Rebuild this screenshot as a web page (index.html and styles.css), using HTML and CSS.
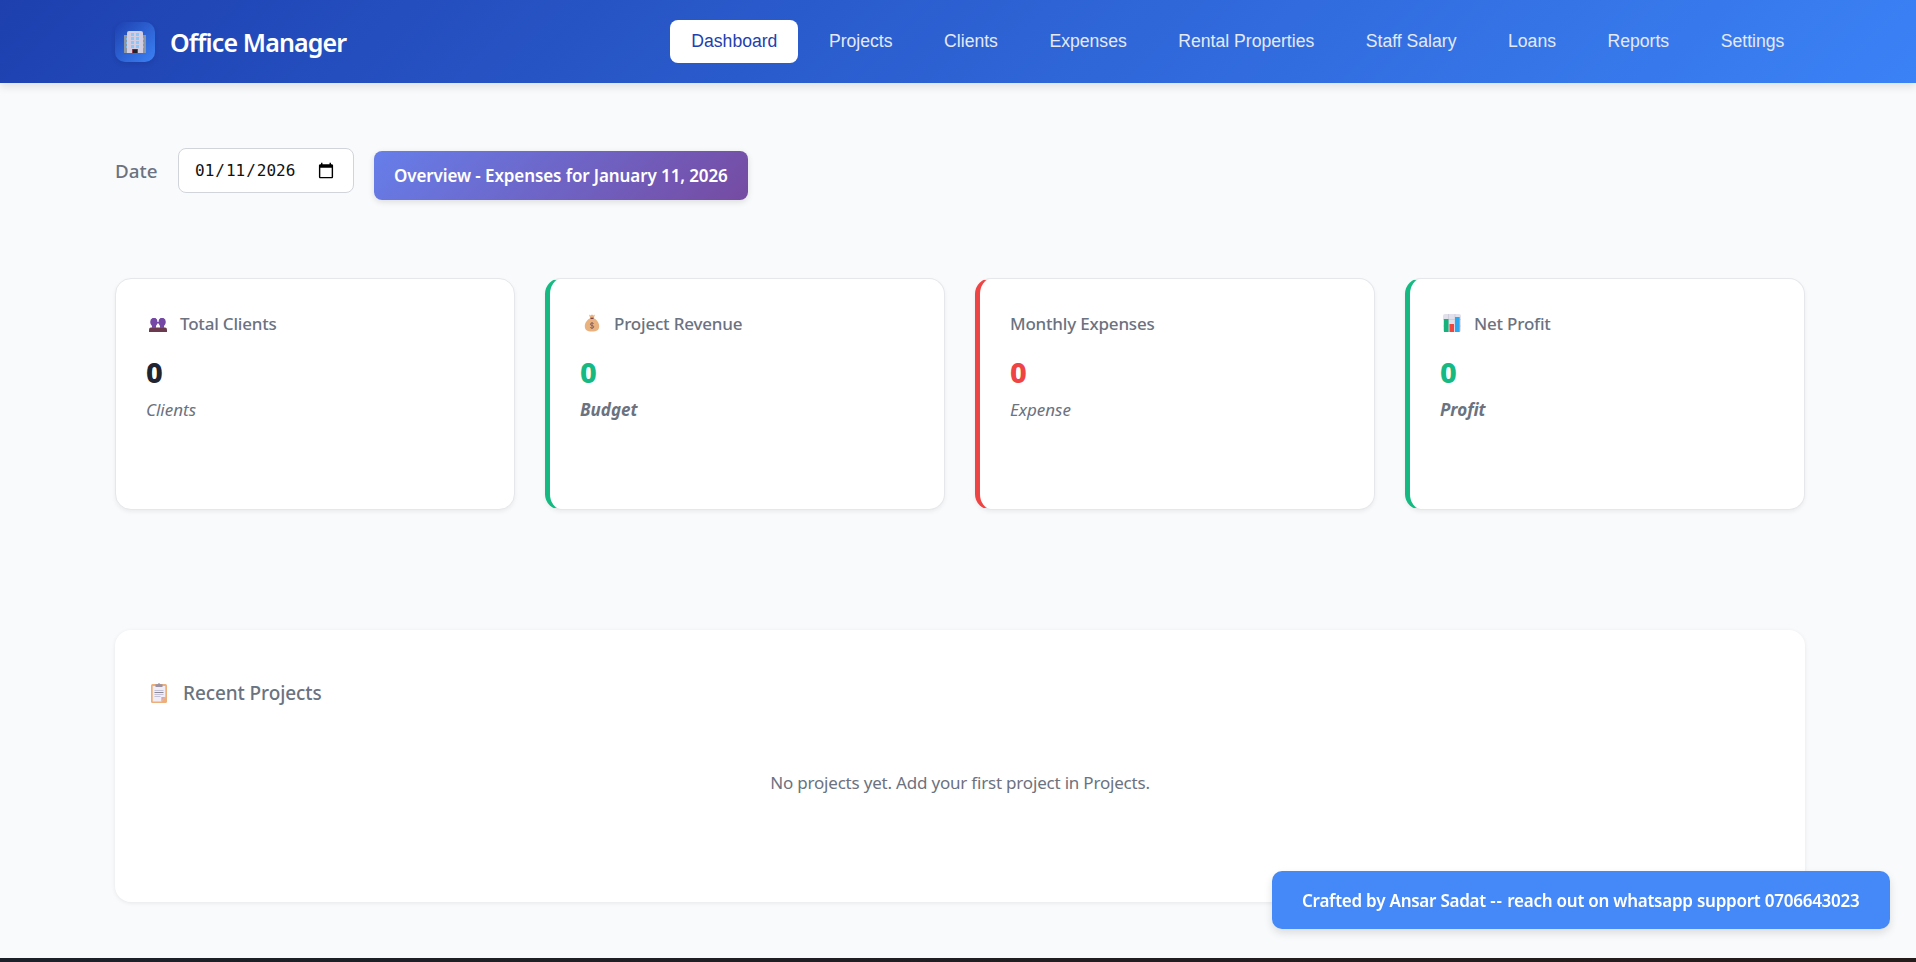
FILE: index.html
```html
<!DOCTYPE html>
<html lang="en">
<head>
<meta charset="utf-8">
<title>Office Manager</title>
<link rel="stylesheet" href="styles.css">
</head>
<body>
<header class="topbar">
  <div class="brand">
    <span class="logo">
      <svg width="22" height="23" viewBox="0 0 22 23"><path fill="#8d97a3" d="M0 4h4v18H0zM18 4h4v18h-4z"/><path fill="#79b9ec" d="M2 7h2v2H2zM2 11h2v2H2zM2 15h2v2H2zM18 7h2v2h-2zM18 11h2v2h-2zM18 15h2v2h-2z"/><path fill="#d2cde0" d="M5 0h12q2 0 2 2v20H3V2q0-2 2-2z"/><path fill="#8ac6f7" d="M7 2h3v3H7zM12 2h3v3h-3zM7 6h3v3H7zM12 6h3v3h-3zM7 10h3v3H7zM12 10h3v3h-3zM7 14h3v3H7zM12 14h3v3h-3z"/><path fill="#8b3b4d" d="M8 18h6v4H8z"/><path fill="#20232b" d="M9 18.500h4V22H9z"/></svg>
    </span>
    <span class="brand-name">Office Manager</span>
  </div>
  <nav class="nav">
    <a class="nav-link active">Dashboard</a>
    <a class="nav-link">Projects</a>
    <a class="nav-link">Clients</a>
    <a class="nav-link">Expenses</a>
    <a class="nav-link">Rental Properties</a>
    <a class="nav-link">Staff Salary</a>
    <a class="nav-link">Loans</a>
    <a class="nav-link">Reports</a>
    <a class="nav-link">Settings</a>
  </nav>
</header>
<main class="page">
  <div class="filters">
    <label class="date-label" for="date">Date</label>
    <input class="date-input" id="date" type="date" value="2026-01-11">
    <div class="overview">Overview - Expenses for January 11, 2026</div>
  </div>
  <section class="cards">
    <article class="card">
      <h3 class="card-title"><svg class="icon" width="18" height="18" viewBox="0 0 18 18"><path fill="#6b3a4e" d="M0 18v-2.500q0-2 2-2h14q2 0 2 2V18z"/><path fill="#7448a4" d="M3.500 4h3q2 1 2 4 0 2.500-1.500 4v2H3v-2q-1.800-1.500-1.800-4 0-3 2.300-4zM11.500 4h3q2.300 1 2.300 4 0 2.500-1.800 4v2h-4v-2q-1.500-1.500-1.500-4 0-3 2-4zM8 8h2v1.500H8z"/></svg><span>Total Clients</span></h3>
      <p class="value">0</p>
      <p class="sub">Clients</p>
    </article>
    <article class="card accent green">
      <h3 class="card-title"><svg class="icon" width="18" height="18" viewBox="0 0 18 18"><path fill="#e9b17e" d="M6 .5l1.500 1L9 .5l1.500 1 1.500-1-1.200 3.700c3 1 5.400 4.800 5.400 8 0 3.300-2 5.300-7.200 5.300s-7.200-2-7.200-5.300c0-3.200 2.400-7 5.400-8z"/><path stroke="#6b3440" stroke-width="1.200" d="M7.500 4.300h3"/><path fill="none" stroke="#8a6560" d="M10.700 10q-.4-1-1.700-1-1.600 0-1.600 1.200T9 11.500q1.800.2 1.800 1.400T9 14.200q-1.400 0-1.800-1M9 8v7"/></svg><span>Project Revenue</span></h3>
      <p class="value">0</p>
      <p class="sub strong">Budget</p>
    </article>
    <article class="card accent red">
      <h3 class="card-title"><span>Monthly Expenses</span></h3>
      <p class="value">0</p>
      <p class="sub">Expense</p>
    </article>
    <article class="card accent green">
      <h3 class="card-title"><svg class="icon" width="18" height="18" viewBox="0 0 18 18"><rect width="18" height="18" rx="2" fill="#e2e0ea"/><path stroke="#c9c7d6" stroke-width=".7" d="M0 5.500h18M0 12h18M5.500 0v18M12 0v18"/><path fill="#17b27c" d="M1 5h4.500v13H1z"/><path fill="#f0443f" d="M6.500 10H11v8H6.500z"/><path fill="#2aa9ee" d="M12 3h4.700v15H12z"/></svg><span>Net Profit</span></h3>
      <p class="value">0</p>
      <p class="sub strong">Profit</p>
    </article>
  </section>
  <section class="panel">
    <h2 class="panel-title"><svg class="clip" width="16" height="20" viewBox="0 0 16 20"><rect y="1" width="16" height="19" rx="1.500" fill="#edae7a"/><path fill="#f0edf6" d="M1.700 3h12.600v11l-4 4.500H1.700z"/><path fill="#d7a6b5" d="M14.300 14l-4 4.500V14z"/><path fill="#9a92a0" d="M4.500 1.200h2Q8-.800 9.500 1.200h2V4h-7z"/><path stroke="#c3c1d8" d="M3.500 7.500h9M3.500 11.500h9M3.500 13.500h6"/><path stroke="#8b8797" d="M3.500 9.500h9"/></svg><span>Recent Projects</span></h2>
    <p class="empty">No projects yet. Add your first project in Projects.</p>
  </section>
</main>
<footer class="footer"></footer>
<div class="toast">Crafted by Ansar Sadat <span class="dashes">--</span> reach out on whatsapp support 0706643023</div>
</body>
</html>
```

FILE: styles.css
```css
* { box-sizing: border-box; margin: 0; padding: 0; }
body {
  min-height: 962px;
  display: flex;
  flex-direction: column;
  background: #f9fafc;
  color: #6b7280;
  font-family: "Noto Sans", sans-serif;
  font-size: 17px;
}
.topbar {
  height: 83px;
  padding: 0 111px 0 115px;
  display: flex;
  justify-content: space-between;
  background: linear-gradient(135deg, #1e40af, #3b82f6);
  box-shadow: 0 4px 8px rgba(0, 0, 0, .1);
}
.brand { display: flex; align-items: center; gap: 15px; }
.logo {
  width: 40px;
  height: 40px;
  margin-top: 1px;
  display: grid;
  place-items: center;
  border-radius: 10px;
  background: linear-gradient(135deg, #1e40af, #3b82f6);
  box-shadow: 0 2px 5px rgba(0, 0, 0, .1);
}
.brand-name { color: #fff; font-size: 25px; font-weight: 600; letter-spacing: -.88px; }
.nav { display: flex; gap: 9.4px; padding-top: 20px; }
.nav-link {
  height: 43px;
  line-height: 42px;
  padding: 0 20.7px 0 21.5px;
  border-radius: 8px;
  color: #e5e9f3;
  font-family: "Liberation Sans", Arial, sans-serif;
  font-size: 17.6px;
}
.nav-link.active { background: #fff; color: #1e40af; }
.page { flex: 1; padding: 65px 111px 0 115px; }
.filters { display: flex; align-items: flex-start; }
.date-label { width: 63px; line-height: 46px; font-size: 18.8px; font-weight: 500; }
.date-input {
  width: 176px;
  height: 45px;
  padding: 0 16px 0 15px;
  border: 1px solid #d1d5db;
  border-radius: 8px;
  background: #fff;
  color: #111;
  font-family: "DejaVu Sans Mono", monospace;
  font-size: 16px;
}
.date-input::-webkit-calendar-picker-indicator { width: 18px; height: 18px; }
.overview {
  margin: 3px 0 0 20px;
  width: 374px;
  height: 49px;
  line-height: 49px;
  padding: 0 20px;
  border-radius: 8px;
  background: linear-gradient(135deg, #667eea, #764ba2);
  box-shadow: 0 2px 6px rgba(0, 0, 0, .12);
  color: #fff;
  font-weight: 600;
  letter-spacing: -.1px;
  white-space: nowrap;
}
.cards {
  display: grid;
  grid-template-columns: repeat(4, 1fr);
  gap: 30px;
  margin-top: 78px;
}
.card {
  height: 232px;
  padding: 29px 30px;
  border: 1px solid #e5e7eb;
  border-radius: 16px;
  background: #fff;
  box-shadow: 0 2px 4px rgba(0, 0, 0, .06);
}
.accent { border-left-width: 5px; }
.green { border-left-color: #15b981; }
.red { border-left-color: #ef4444; }
.card-title { display: flex; align-items: center; height: 30px; font-size: 17px; font-weight: 500; letter-spacing: -.2px; }
.icon { margin: 0 13px 0 3px; }
.value { margin-top: 14px; line-height: 40px; font-size: 29px; font-weight: 800; color: #1f2430; }
.green .value { color: #15b981; }
.red .value { color: #ef4444; }
.sub { margin-top: 4px; line-height: 28px; font-style: italic; }
.strong { font-weight: 700; }
.panel {
  height: 272px;
  margin-top: 120px;
  padding: 46px 30px 0;
  border-radius: 16px;
  background: #fff;
  box-shadow: 0 1px 4px rgba(0, 0, 0, .08);
}
.panel-title { display: flex; align-items: center; height: 34px; font-size: 19px; font-weight: 500; letter-spacing: -.1px; }
.clip { margin: 0 16px 0 6px; }
.empty { margin-top: 57px; line-height: 32px; text-align: center; letter-spacing: -.2px; }
.footer { height: 4px; background: linear-gradient(90deg, #1c2029, #251b1b); }
.toast {
  position: fixed;
  right: 26px;
  bottom: 33px;
  width: 618px;
  height: 58px;
  line-height: 60px;
  padding: 0 30px;
  border-radius: 10px;
  background: #4588f7;
  box-shadow: 0 4px 8px rgba(0, 0, 0, .12);
  color: #fff;
  font-weight: 600;
  letter-spacing: -.24px;
  white-space: nowrap;
}
.dashes { letter-spacing: 1px; }
```
